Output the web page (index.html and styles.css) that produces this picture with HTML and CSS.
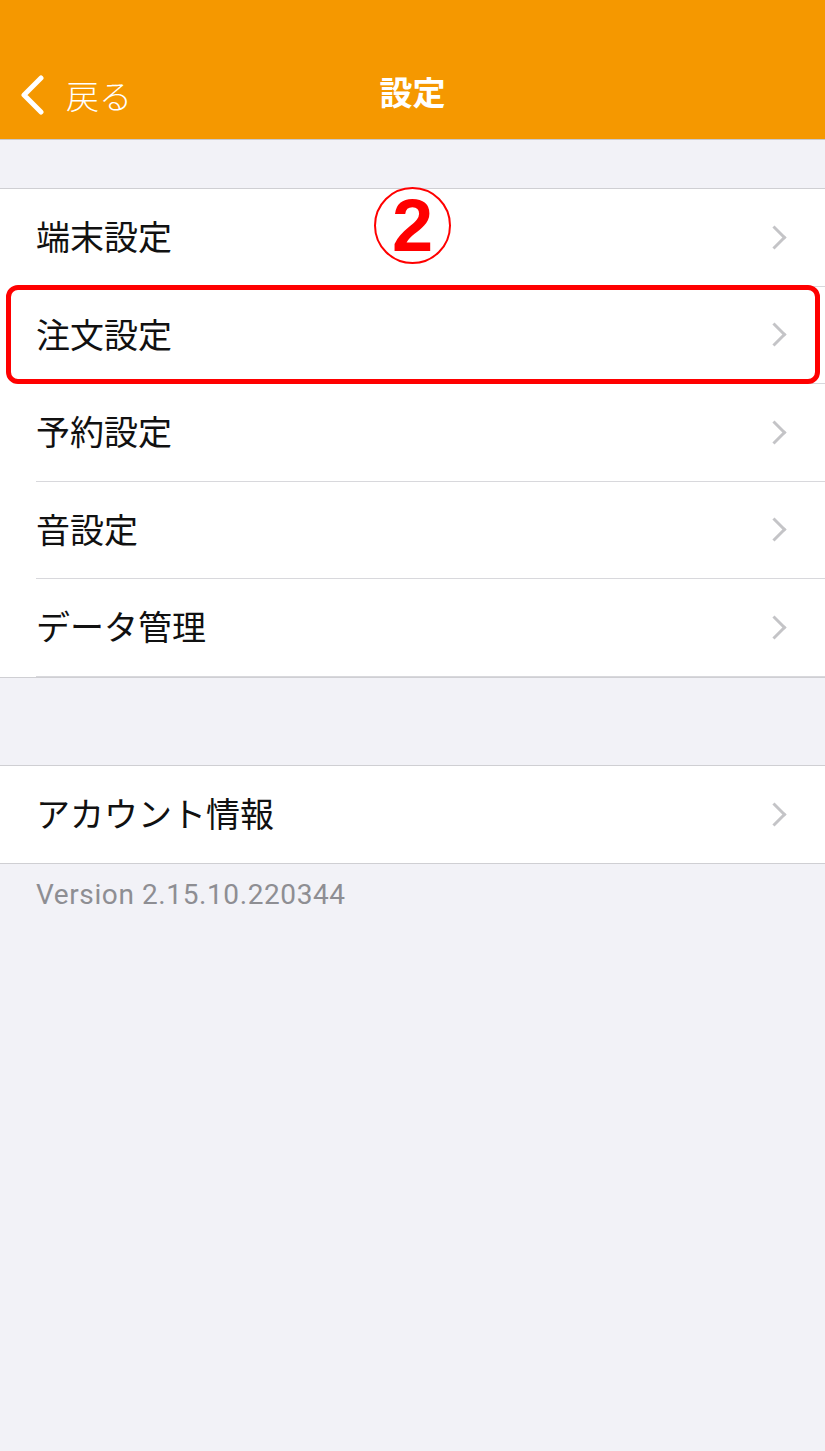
FILE: index.html
```html
<!DOCTYPE html>
<html lang="ja">
<head>
  <meta charset="UTF-8" />
  <meta name="viewport" content="width=device-width, initial-scale=1.0"/>
  <title>設定</title>
  <link rel="stylesheet" href="styles.css">
</head>
<body>

  <div class="navbar">
    <div class="back">
      <svg class="back-icon" width="28" height="40" viewBox="0 0 28 40">
        <path d="M23 3 L6 20 L23 37" fill="none" stroke="#fff" stroke-width="5" stroke-linecap="round" stroke-linejoin="round"/>
      </svg>
      <span>戻る</span>
    </div>
    <div class="title">設定</div>
  </div>

  <div class="group first-group">
    <div class="row"><span>端末設定</span><i class="chevron"></i></div>
    <div class="row"><span>注文設定</span><i class="chevron"></i></div>
    <div class="row"><span>予約設定</span><i class="chevron"></i></div>
    <div class="row"><span>音設定</span><i class="chevron"></i></div>
    <div class="row"><span>データ管理</span><i class="chevron"></i></div>

    <div class="mark-box"></div>
    <div class="mark-num">2</div>
  </div>

  <div class="group second-group">
    <div class="row"><span>アカウント情報</span><i class="chevron"></i></div>
  </div>

  <div class="version">Version 2.15.10.220344</div>

</body>
</html>
```

FILE: styles.css
```css
body {
  margin: 0;
  background: #f2f2f7;
  font-family: "Noto Sans CJK JP", "Noto Sans", sans-serif;
  width: 825px;
  min-height: 1451px;
}
.navbar {
  position: relative;
  height: 139px;
  background: #f59800;
  border-bottom: 1px solid #c9c9cc;
  color: #fff;
}
.back {
  position: absolute;
  left: 18px;
  top: 71px;
  display: flex;
  align-items: center;
  gap: 20px;
  font-size: 33px;
  font-weight: 300;
}
.back-icon {
  display: block;
}
.title {
  text-align: center;
  padding-top: 68px;
  font-size: 33px;
  font-weight: 700;
  line-height: 46px;
}
.group {
  position: relative;
  background: #fff;
  border-top: 1px solid #cfcfd3;
  border-bottom: 1px solid #cfcfd3;
}
.first-group {
  margin-top: 48px;
}
.second-group {
  margin-top: 87px;
}
.row {
  height: 97.5px;
  box-sizing: border-box;
  margin-left: 36px;
  padding-right: 38px;
  display: flex;
  align-items: center;
  justify-content: space-between;
  font-size: 34px;
  color: #111;
  border-bottom: 1.5px solid #d8d8dc;
}
.row span {
  margin-top: -3px;
}
.row:last-of-type {
  border-bottom: none;
}
.chevron {
  width: 14px;
  height: 14px;
  border-top: 3.5px solid #c4c4c7;
  border-right: 3.5px solid #c4c4c7;
  transform: rotate(45deg);
  margin-right: 4px;
}
.mark-box {
  position: absolute;
  left: 6px;
  top: 96px;
  width: 814px;
  height: 99px;
  box-sizing: border-box;
  border: 5px solid #ff0000;
  border-radius: 12px;
}
.mark-num {
  position: absolute;
  left: 374px;
  top: -2px;
  width: 77px;
  height: 77px;
  box-sizing: border-box;
  border: 2.5px solid #ff0000;
  border-radius: 50%;
  color: #ff0000;
  font-family: "Liberation Sans", sans-serif;
  font-weight: 700;
  font-size: 74px;
  line-height: 74px;
  text-align: center;
}
.version {
  padding: 14px 0 0 36px;
  font-size: 28px;
  letter-spacing: 0.6px;
  color: #8e8e93;
  font-family: "Roboto", "Liberation Sans", sans-serif;
}
```
